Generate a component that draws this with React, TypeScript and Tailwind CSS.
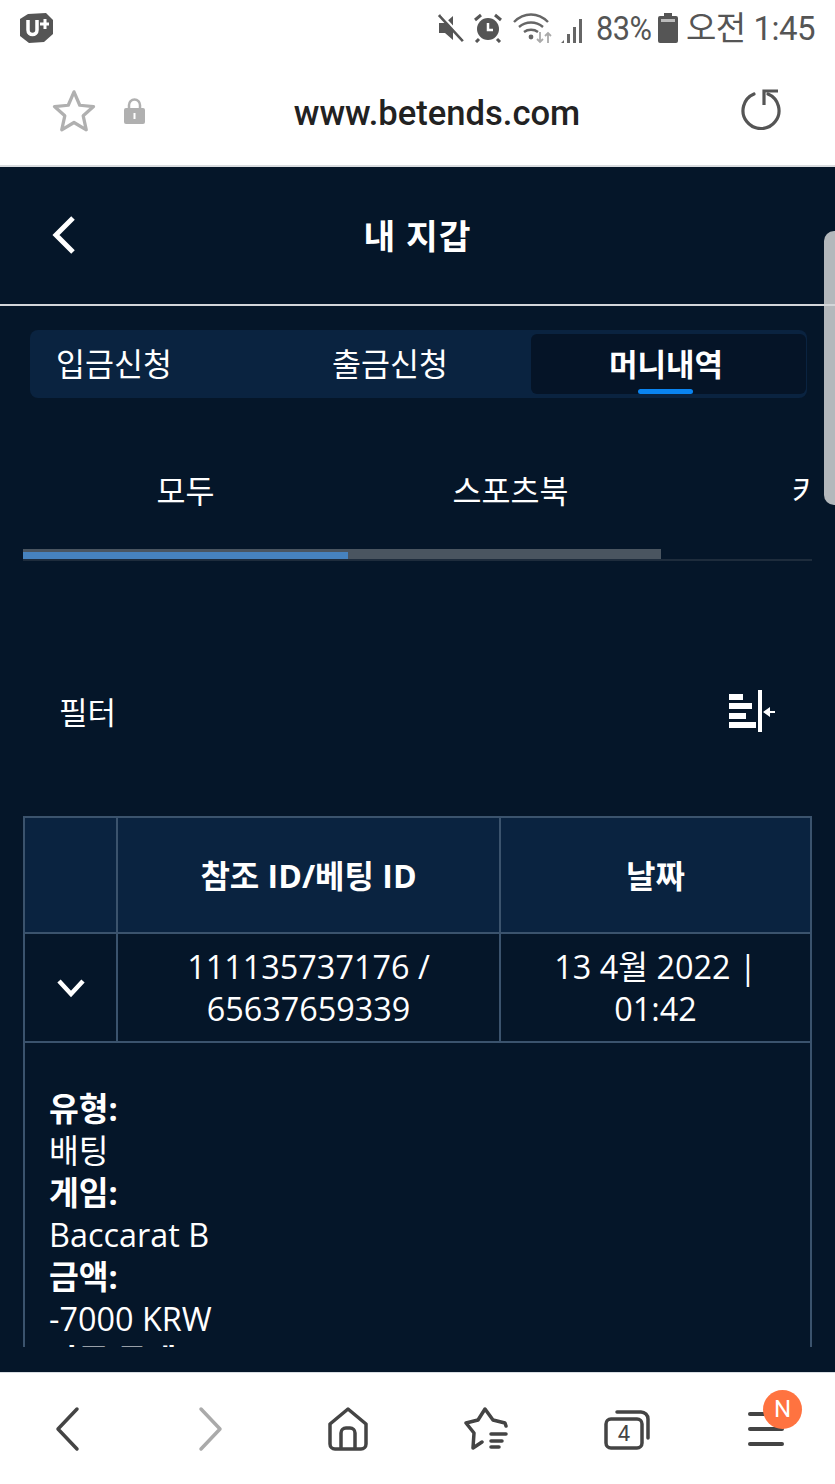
import React from 'react';

const kr = 'font-["Open_Sans","Noto_Sans_CJK_KR",sans-serif]';

const StatusIcons = () => (
  <div className="flex items-center text-[#555]">
    {/* muted speaker */}
    <svg width="30" height="30" viewBox="0 0 30 30" className="mr-[7px]">
      <path d="M3 10h6l8-7v24l-8-7H3z" fill="#555" />
      <path d="M3 2l24 26" stroke="#555" strokeWidth="3" />
      <path d="M5 1l24 26" stroke="#fff" strokeWidth="2" />
    </svg>
    {/* alarm */}
    <svg width="30" height="30" viewBox="0 0 30 30" className="mr-[10px]">
      <circle cx="15" cy="16" r="11" fill="#555" />
      <path d="M15 10v7h5" stroke="#fff" strokeWidth="2.5" fill="none" />
      <path d="M2 7l6-5M28 7l-6-5M6 26l-3 3M24 26l3 3" stroke="#555" strokeWidth="3" />
    </svg>
    {/* wifi with data arrows and signal bars */}
    <svg width="75" height="32" viewBox="0 0 75 32" className="mr-[8px]">
      <path d="M1 10c10-10 24-10 34 0M6 15c7-6 17-6 24 0M11 20c4-3 10-3 14 0" stroke="#666" strokeWidth="2.4" fill="none" />
      <circle cx="18" cy="25" r="2.4" fill="#666" />
      <path d="M27 20v10M24 27l3 3 3-3" stroke="#aaa" strokeWidth="1.8" fill="none" />
      <path d="M35 31V21M32 24l3-3 3 3" stroke="#aaa" strokeWidth="1.8" fill="none" />
      <path d="M48 31l3-3v3zM54 31V22h3v9zM60 31V15h3v16zM66 31V7h3v24z" fill="#666" />
    </svg>
    <span className='font-["Roboto",sans-serif] text-[33px] leading-none tracking-[-0.5px] scale-x-[0.93] w-[56px] origin-left'>83%</span>
    {/* battery */}
    <svg width="20" height="30" viewBox="0 0 20 30" className="ml-[6px] mr-[8px]">
      <path d="M6 0h8v3h4a2 2 0 0 1 2 2v23a2 2 0 0 1-2 2H2a2 2 0 0 1-2-2V5a2 2 0 0 1 2-2h4z" fill="#555" />
      <rect x="3" y="6" width="14" height="3" fill="#bbb" />
    </svg>
    <span className='font-["Roboto","Noto_Sans_CJK_KR",sans-serif] text-[33px] leading-none tracking-[-0.5px] w-[129px] whitespace-nowrap'>오전 1:45</span>
  </div>
);

const CarrierLogo = () => (
  <svg width="34" height="30" viewBox="0 0 34 30">
    <path d="M8 1l18-1 7 7v14l-9 8-15 1-9-7V6z" fill="#555" />
    <path d="M8 7v10c0 6 9 6 9 0V7" stroke="#fff" strokeWidth="3.5" fill="none" />
    <path d="M20 11h9M25 6v10" stroke="#fff" strokeWidth="3" />
  </svg>
);

const FilterIcon = () => (
  <svg width="46" height="42" viewBox="0 0 46 42" fill="#fff" className="-mt-[2px]">
    <rect x="0" y="4" width="14" height="6" />
    <rect x="0" y="13" width="23" height="6" />
    <rect x="0" y="23" width="17" height="6" />
    <rect x="0" y="32" width="27" height="6" />
    <rect x="29" y="0" width="4" height="42" />
    <path d="M34 22l7-5v4h5v2h-5v4z" />
  </svg>
);

const BottomNav = () => (
  <nav className="h-[112px] shrink-0 bg-white border-t border-[#d8dde2] flex items-center pl-[54px]">
    <svg width="26" height="46" viewBox="0 0 26 46" fill="none" stroke="#444" strokeWidth="3.5" strokeLinecap="round" strokeLinejoin="round">
      <path d="M23 3L4 23l19 20" />
    </svg>
    <svg width="26" height="46" viewBox="0 0 26 46" fill="none" stroke="#aaa" strokeWidth="3.5" strokeLinecap="round" strokeLinejoin="round" className="ml-[118px]">
      <path d="M3 3l19 20L3 43" />
    </svg>
    <svg width="42" height="44" viewBox="0 0 42 44" fill="none" stroke="#444" strokeWidth="3.5" strokeLinejoin="round" className="ml-[103px]">
      <path d="M21 2L3 17v20a5 5 0 0 0 5 5h26a5 5 0 0 0 5-5V17z" />
      <path d="M14 42V26a5 5 0 0 1 5-5h4a5 5 0 0 1 5 5v16" />
    </svg>
    <svg width="46" height="46" viewBox="0 0 46 46" fill="none" stroke="#444" strokeWidth="3.5" strokeLinecap="round" strokeLinejoin="round" className="ml-[95px]">
      <path d="M42 20l-1-3-12-3-8-11-7 11-12 3 8 10-1 15 9-6" />
      <path d="M27 28h15M27 35h11M27 41h8" />
    </svg>
    <svg width="46" height="42" viewBox="0 0 46 42" fill="none" stroke="#444" strokeWidth="3.5" className="ml-[94px]">
      <rect x="2" y="11" width="36" height="29" rx="5" />
      <path d="M13 4h24a7 7 0 0 1 7 7v19" strokeLinecap="round" />
      <text x="20" y="33" textAnchor="middle" fontSize="22" fill="#444" stroke="none" fontFamily="Roboto, sans-serif">4</text>
    </svg>
    <div className="relative ml-[98px] w-[36px] h-[34px] flex flex-col justify-between">
      <span className="h-[4px] w-[36px] rounded-full bg-[#444]" />
      <span className="h-[4px] w-[36px] rounded-full bg-[#444]" />
      <span className="h-[4px] w-[36px] rounded-full bg-[#444]" />
      <span className='absolute -top-[22px] left-[15px] w-[39px] h-[39px] rounded-full bg-[#ff7340] text-white flex items-center justify-center text-[24px] font-["Roboto",sans-serif]'>N</span>
    </div>
  </nav>
);

const Cell = ({ className = '', children }: { className?: string; children?: React.ReactNode }) => (
  <td className={`border-2 border-[#3b536d] text-center align-middle ${className}`}>{children}</td>
);

const Row = ({ label, value }: { label: string; value: string }) => (
  <>
    <div className="font-bold">{label}</div>
    <div>{value}</div>
  </>
);

export default function App() {
  return (
    <div className="w-[835px] h-[1484px] flex flex-col overflow-hidden bg-white">
      {/* system status bar */}
      <div className="h-[56px] shrink-0 flex items-center justify-between px-[20px]">
        <CarrierLogo />
        <StatusIcons />
      </div>

      {/* browser address bar */}
      <div className="h-[111px] shrink-0 border-b-2 border-[#d9dcdf] flex items-center pl-[51px] pr-[53px]">
        <svg width="46" height="46" viewBox="0 0 24 24" fill="none" stroke="#b0b0b0" strokeWidth="1.7" strokeLinejoin="round">
          <path d="M12 2l3 7 7.2.7-5.4 4.8 1.6 7.3L12 18l-6.4 3.8 1.6-7.3L1.8 9.7 9 9z" />
        </svg>
        <svg width="23" height="28" viewBox="0 0 23 28" className="ml-[26px]">
          <path d="M6 12V8a5.5 5.5 0 0 1 11 0v4" stroke="#b0b0b0" strokeWidth="2.5" fill="none" />
          <rect x="1" y="11" width="21" height="16" rx="2" fill="#b0b0b0" />
          <rect x="10.5" y="16" width="2" height="6" fill="#fff" />
        </svg>
        <div className='flex-1 text-center font-["Roboto",sans-serif] font-medium text-[34.6px] leading-none text-[#222] pr-[12px] pt-[6px]'>www.betends.com</div>
        <svg width="42" height="42" viewBox="0 0 42 42" fill="none" stroke="#555" strokeWidth="3.2" className="-mt-[4px]">
          <path d="M14 6a18 18 0 1 0 14 0" strokeLinecap="round" />
          <path d="M24 17V3h14" />
        </svg>
      </div>

      <main className={`relative flex-1 min-h-0 flex flex-col bg-[#051629] text-white ${kr}`}>
        {/* page scroll thumb */}
        <div className="absolute right-0 top-[64px] w-[11px] h-[274px] rounded-l-[10px] bg-[#b4b8bc]" />

        <header className="h-[139px] shrink-0 border-b-2 border-[#d3d6d9] relative flex items-center justify-center pt-[2px]">
          <svg width="24" height="38" viewBox="0 0 24 38" fill="none" stroke="#fff" strokeWidth="5" className="absolute left-[52px] top-[49px]">
            <path d="M21 2L4 19l17 17" />
          </svg>
          <h1 className="font-bold text-[34.5px] leading-none tracking-[1px]">내 지갑</h1>
        </header>

        {/* wallet tabs */}
        <div className="mt-[24px] ml-[30px] mr-[28px] h-[68px] shrink-0 rounded-[8px] bg-[#0a2340] flex items-center pr-[1px] text-[31.5px]">
          <div className="w-[255px] pl-[26px]">입금신청</div>
          <div className="w-[246px] pl-[47px]">출금신청</div>
          <div className="relative flex-1 h-[60px] rounded-[6px] bg-[#051427] flex items-center justify-center font-bold text-[31px] pr-[5px]">
            머니내역
            <span className="absolute bottom-0 left-[107px] w-[55px] h-[5px] rounded-full bg-[#0a84f0]" />
          </div>
        </div>

        {/* game category tabs, last one runs past the edge */}
        <div className="mt-[67px] ml-[23px] w-[789px] shrink-0 overflow-hidden">
          <div className="flex w-[975px] text-[31.5px] leading-[52px] h-[52px]">
            <div className="w-[325px] text-center">모두</div>
            <div className="w-[325px] text-center">스포츠북</div>
            <div className="w-[325px] pl-[119px]">카지노</div>
          </div>
          <div className="mt-[32px] h-[12px] border-b-2 border-[#1e2c3c]">
            <div className="w-[638px] h-[10px] bg-[#4a5560]">
              <div className="relative top-[3px] w-[325px] h-[7px] bg-[#4682be]" />
            </div>
          </div>
        </div>

        {/* filter row */}
        <div className="mt-[127px] pl-[59px] pr-[60px] h-[48px] shrink-0 flex items-center justify-between text-[31px]">
          <span>필터</span>
          <FilterIcon />
        </div>

        {/* transactions table, clipped by the scroll area */}
        <div className="mt-[80px] ml-[23px] w-[789px] h-[531px] shrink-0 overflow-hidden">
          <table className="w-full table-fixed border-collapse text-[32.4px] leading-[42px]">
            <colgroup>
              <col className="w-[93px]" />
              <col className="w-[383px]" />
              <col />
            </colgroup>
            <thead>
              <tr className="h-[116px] bg-[#0a2340] font-bold">
                <Cell />
                <Cell className="font-bold text-[32px] pt-[2px]">참조 ID/베팅 ID</Cell>
                <Cell className="font-bold text-[32px] pt-[2px]">날짜</Cell>
              </tr>
            </thead>
            <tbody>
              <tr className="h-[109px]">
                <Cell>
                  <svg width="30" height="20" viewBox="0 0 30 20" fill="none" stroke="#fff" strokeWidth="4.5" className="mx-auto">
                    <path d="M3 3l12 13L27 3" />
                  </svg>
                </Cell>
                <Cell className="pb-[1px]">111135737176 / 65637659339</Cell>
                <Cell className="pb-[1px]">
                  13 4월 2022 |<br />01:42
                </Cell>
              </tr>
              <tr>
                <td colSpan={3} className="border-2 border-[#3b536d] pl-[24px] pt-[44px] pb-[40px] text-left">
                  <Row label="유형:" value="배팅" />
                  <Row label="게임:" value="Baccarat B" />
                  <Row label="금액:" value="-7000 KRW" />
                  <Row label="잔존 금액:" value="0 KRW" />
                </td>
              </tr>
            </tbody>
          </table>
        </div>
      </main>

      <BottomNav />
    </div>
  );
}
